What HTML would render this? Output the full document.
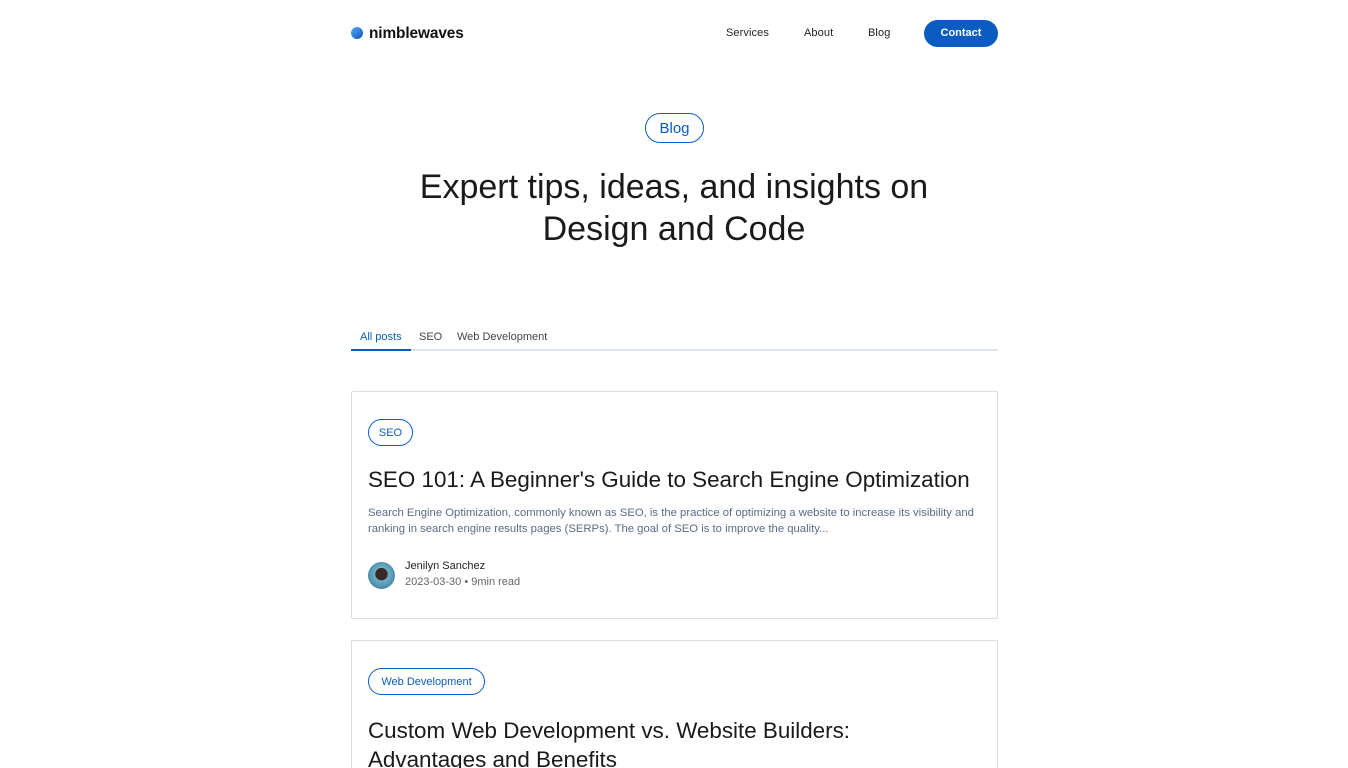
<!DOCTYPE html>
<html style="width:1348px;height:768px;overflow:hidden"><head><meta charset="utf-8"><style>
*{margin:0;padding:0;box-sizing:border-box}
body{width:1348px;height:768px;overflow:hidden;background:#fff;font-family:"Liberation Sans",sans-serif;color:#1a1a1a;position:relative}
.a{position:absolute}
.logo{left:369px;top:25px;font-size:15.4px;font-weight:bold;color:#111;letter-spacing:-0.1px}
.dot{left:351px;top:27px;width:12px;height:12px;border-radius:50%;background:linear-gradient(135deg,#5aa8f0,#0b57c2)}
.nav{top:27px;font-size:11px;color:#222;letter-spacing:0.1px}
.btn{left:924px;top:20px;width:74px;height:27px;border-radius:14px;background:#0b5cc1;color:#fff;font-size:11px;font-weight:bold;text-align:center;line-height:27px}
.pill{border:1px solid #0b5cc1;color:#0b5cc1;border-radius:16px;text-align:center}
h1{position:absolute;left:0;width:1348px;top:166px;text-align:center;font-weight:normal;font-size:34px;line-height:42px;color:#1a1a1a}
.tab{top:331px;font-size:11px;color:#444}
.card{left:351px;width:647px;border:1px solid #d8dce3;border-radius:2px}
.t{font-size:22.4px;color:#1a1a1a}
.d{font-size:11.3px;color:#5b6b85;line-height:16px}
</style></head><body>
<div class="a dot"></div><div class="a logo">nimblewaves</div>
<div class="a nav" style="left:726px">Services</div>
<div class="a nav" style="left:804px">About</div>
<div class="a nav" style="left:868px">Blog</div>
<div class="a btn">Contact</div>
<div class="a pill" style="left:645px;top:113px;width:59px;height:30px;line-height:29px;font-size:15px">Blog</div>
<h1>Expert tips, ideas, and insights on<br>Design and Code</h1>
<div class="a tab" style="left:360px;color:#0b5cc1">All posts</div>
<div class="a tab" style="left:419px">SEO</div>
<div class="a tab" style="left:457px">Web Development</div>
<div class="a" style="left:351px;top:349px;width:647px;height:2px;background:#dde3ec"></div>
<div class="a" style="left:351px;top:349px;width:60px;height:2px;background:#0b5cc1"></div>
<div class="a card" style="top:391px;height:228px"></div>
<div class="a pill" style="left:368px;top:419px;width:45px;height:27px;line-height:26px;font-size:11px">SEO</div>
<div class="a t" style="left:368px;top:467px">SEO 101: A Beginner's Guide to Search Engine Optimization</div>
<div class="a d" style="left:368px;top:505px;width:625px">Search Engine Optimization, commonly known as SEO, is the practice of optimizing a website to increase its visibility and ranking in search engine results pages (SERPs). The goal of SEO is to improve the quality...</div>
<div class="a" style="left:368px;top:562px;width:27px;height:27px;border-radius:50%;background:radial-gradient(circle at 50% 45%,#3a2a25 30%,#6fb0c8 32%,#4a8aa8 70%)"></div>
<div class="a" style="left:405px;top:560px;font-size:11px;color:#222">Jenilyn Sanchez</div>
<div class="a" style="left:405px;top:576px;font-size:11px;color:#666">2023-03-30 • 9min read</div>
<div class="a card" style="top:640px;height:140px"></div>
<div class="a pill" style="left:368px;top:668px;width:117px;height:27px;line-height:26px;font-size:11px">Web Development</div>
<div class="a t" style="left:368px;top:716px;line-height:29px">Custom Web Development vs. Website Builders:<br>Advantages and Benefits</div>
</body></html>
